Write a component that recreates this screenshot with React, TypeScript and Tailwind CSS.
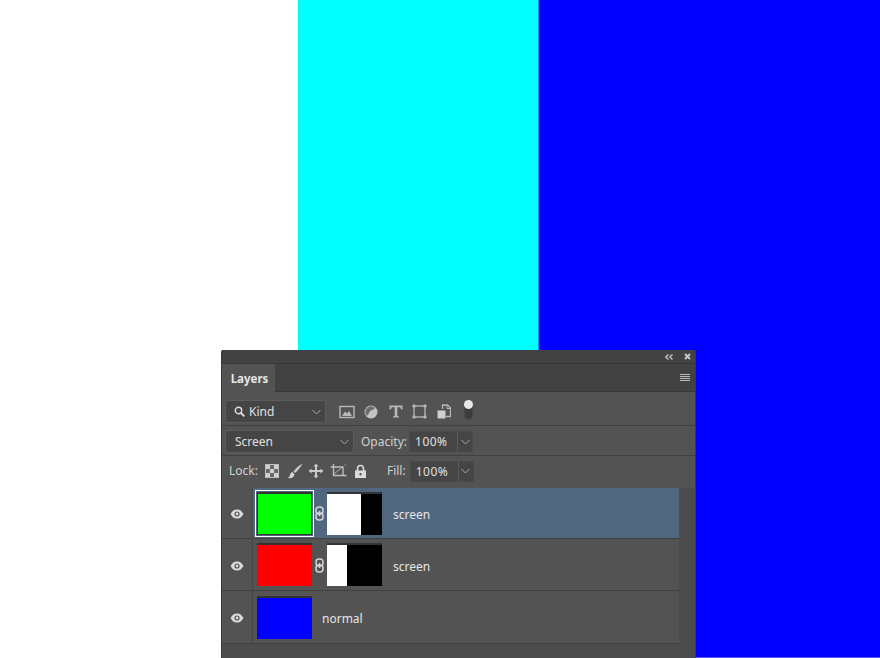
import React from "react";

const font = { fontFamily: '"Noto Sans", "Liberation Sans", sans-serif' };

function Chevron() {
  return (
    <svg width="9" height="6" viewBox="0 0 9 6" className="shrink-0">
      <path d="M0.500 1 L4.500 5 L8.500 1" fill="none" stroke="#aaaaaa" strokeWidth="1" />
    </svg>
  );
}

function Eye() {
  return (
    <svg width="14" height="10" viewBox="0 0 14 10">
      <path d="M0.500 5 C3 1 5 0.500 7 0.500 C9 0.500 11 1 13.500 5 C11 9 9 9.500 7 9.500 C5 9.500 3 9 0.500 5 Z" fill="#dcdcdc" />
      <circle cx="7" cy="5" r="2.600" fill="#535353" />
      <circle cx="7" cy="5" r="1.400" fill="#dcdcdc" />
    </svg>
  );
}

function Link() {
  return (
    <svg width="9" height="15" viewBox="0 0 9 15" className="shrink-0">
      <rect x="1" y="1" width="7" height="7" rx="3" fill="none" stroke="#d4d4d4" strokeWidth="1.500" />
      <rect x="1" y="7" width="7" height="7" rx="3" fill="none" stroke="#d4d4d4" strokeWidth="1.500" />
      <path d="M4.500 5v5" stroke="#d4d4d4" strokeWidth="1.500" />
    </svg>
  );
}

function Thumb({ color, selected }: { color: string; selected?: boolean }) {
  return (
    <div
      className={`w-[55px] h-[43px] border-t-2 border-t-[#333333] ${selected ? "border-x border-b border-x-[#333333] border-b-[#333333]" : ""}`}
      style={{ backgroundColor: color }}
    />
  );
}

function Mask({ white }: { white: number }) {
  return (
    <div className="w-[55px] h-[43px] border-t-2 border-t-[#333333] bg-black">
      <div className="h-full bg-white" style={{ width: white }} />
    </div>
  );
}

function FilterIcons() {
  return (
    <div className="flex items-center ml-[13px]">
      <svg width="16" height="14" viewBox="0 0 16 14">
        <rect x="1" y="1.500" width="14" height="11" fill="none" stroke="#b8b8b8" strokeWidth="1.400" />
        <path d="M3 11 L6 6.500 L8 8.500 L10 6 L13 11 Z" fill="#b8b8b8" />
      </svg>
      <svg width="14" height="14" viewBox="0 0 14 14" className="ml-[9px]">
        <circle cx="7" cy="7" r="6.500" fill="#c4c4c4" />
        <path d="M11 3 A5.600 5.600 0 0 0 3 11 C5 9 5 6.500 7 5.500 C9 4.500 10 4.500 11 3 Z" fill="#6e6e6e" />
      </svg>
      <svg width="14" height="13" viewBox="0 0 14 13" className="ml-[11px]">
        <path d="M0.500 0.500h13v4h-1.300l-1-2.200H8.300v8.500l1.700 0.700v1H4v-1l1.700-0.700V2.300H2.800l-1 2.200H0.500Z" fill="#b8b8b8" />
      </svg>
      <svg width="15" height="15" viewBox="0 0 15 15" className="ml-[9px]">
        <rect x="2" y="2" width="11" height="11" fill="none" stroke="#b8b8b8" strokeWidth="1.300" />
        <rect x="0.500" y="0.500" width="3" height="3" rx="1" fill="#b8b8b8" />
        <rect x="11.500" y="0.500" width="3" height="3" rx="1" fill="#b8b8b8" />
        <rect x="0.500" y="11.500" width="3" height="3" rx="1" fill="#b8b8b8" />
        <rect x="11.500" y="11.500" width="3" height="3" rx="1" fill="#b8b8b8" />
      </svg>
      <svg width="14" height="15" viewBox="0 0 14 15" className="ml-[10px]">
        <path d="M5.500 5V1h5l3 3v8.500H9" fill="none" stroke="#b8b8b8" strokeWidth="1.300" />
        <path d="M10 1v3.500h3.500" fill="none" stroke="#b8b8b8" strokeWidth="1" />
        <rect x="0.500" y="6.500" width="8" height="8" fill="#d0d0d0" />
      </svg>
      <div className="relative w-[9px] h-[15px] rounded-full bg-[#3c3c3c] border border-[#484848] ml-[13px] mt-[1px]">
        <div className="absolute left-[-1px] top-[-6px] w-[9px] h-[9px] rounded-full bg-[#e6e6e6]" />
      </div>
    </div>
  );
}

function LockIcons() {
  return (
    <div className="flex items-center ml-[7px]">
      <svg width="14" height="14" viewBox="0 0 14 14">
        <rect x="0.500" y="0.500" width="13" height="13" fill="#6a6a6a" stroke="#c0c0c0" />
        <path d="M1 1h4v4H1ZM9 1h4v4H9ZM5 5h4v4H5ZM1 9h4v4H1ZM9 9h4v4H9Z" fill="#d0d0d0" />
      </svg>
      <svg width="16" height="16" viewBox="0 0 16 16" className="ml-[8px]">
        <path d="M15.500 0.500 C12 2.500 8 6 6.500 8.500 L8 10 C10.500 8 14 4 15.500 0.500 Z" fill="#c8c8c8" />
        <path d="M5.500 9 C3 9.500 3.500 12 2.500 13.500 C2 14.200 1 14.500 0.500 14.800 C3 15.800 6.500 15.500 7.500 11.500 Z" fill="#d4d4d4" />
      </svg>
      <svg width="16" height="16" viewBox="0 0 16 16" className="ml-[5px]">
        <path d="M8 0.500 L10.500 3.500H9V7H12.500V5.500L15.500 8L12.500 10.500V9H9V12.500H10.500L8 15.500L5.500 12.500H7V9H3.500V10.500L0.500 8L3.500 5.500V7H7V3.500H5.500Z" fill="#c8c8c8" />
      </svg>
      <svg width="17" height="16" viewBox="0 0 17 16" className="ml-[6px]">
        <path d="M0.500 4h12.500v9M3.500 1v11.500h13" fill="none" stroke="#c0c0c0" strokeWidth="1.300" />
        <path d="M4 11 L12.500 4" stroke="#c0c0c0" strokeWidth="0.900" />
        <path d="M14.500 1.500l1 1" stroke="#c0c0c0" />
      </svg>
      <svg width="13" height="15" viewBox="0 0 13 15" className="ml-[7px]">
        <path d="M3.500 7V4.500a3 3 0 0 1 6 0V7" fill="none" stroke="#dcdcdc" strokeWidth="1.600" />
        <path d="M1 6.500h11V14H1Z M6.500 9a1.200 1.200 0 1 0 0.010 0Z" fill="#dcdcdc" fillRule="evenodd" />
      </svg>
    </div>
  );
}

function Percent() {
  return (
    <div className="flex h-[21px] w-[64px] rounded-[2px] bg-[#454545] border border-[#4a4a4a] text-[#e0e0e0]">
      <div className="w-[48px] pl-[5px] leading-[19px] tracking-[0.5px] border-r border-[#5c5c5c]">100%</div>
      <div className="flex-1 flex items-center justify-center"><Chevron /></div>
    </div>
  );
}

function LayerRow({
  selected,
  name,
  color,
  mask,
  h,
}: {
  selected?: boolean;
  name: string;
  color: string;
  mask?: number;
  h: string;
}) {
  return (
    <div className={`flex ${h} border-b border-[#414141] shrink-0`}>
      <div className="w-[31px] flex items-center justify-center border-r border-[#464646] pt-[2px]">
        <Eye />
      </div>
      <div className={`flex-1 flex items-center pl-[4px] ${selected ? "bg-[#51667f]" : ""}`}>
        <div className={selected ? "outline outline-1 outline-white outline-offset-[1px]" : ""}>
          <Thumb color={color} selected={selected} />
        </div>
        {mask !== undefined ? (
          <>
            <div className="w-[15px] flex justify-center pt-[1px]"><Link /></div>
            <Mask white={mask} />
            <span className="ml-[11px] pt-[4px] text-[#e6e6e6]">{name}</span>
          </>
        ) : (
          <span className="ml-[10px] pt-[4px] text-[#e6e6e6]">{name}</span>
        )}
      </div>
    </div>
  );
}

export default function App() {
  return (
    <div className="relative w-[880px] h-[658px] overflow-hidden flex text-[12px]" style={font}>
      <div className="w-[298px] bg-white" />
      <div className="w-[240px] bg-[#00ffff]" />
      <div className="w-[1px] bg-[#0090ff]" />
      <div className="flex-1 flex flex-col">
        <div className="flex-1 bg-[#0000ff]" />
        <div className="h-[1px] bg-[#5c5cff]" />
      </div>

      <div className="absolute left-[221px] top-[350px] w-[475px] h-[308px] flex flex-col bg-[#535353] rounded-t-[2px] border-l border-r border-[#3a3a3a]">
        <div className="h-[14px] bg-[#424242] border-b border-[#383838] flex items-center justify-end pr-[4px] gap-[11px] shrink-0">
          <svg width="8" height="6" viewBox="0 0 8 6">
            <path d="M3.500 0.500 L0.800 3 L3.500 5.500 M7.500 0.500 L4.800 3 L7.500 5.500" fill="none" stroke="#c8c8c8" strokeWidth="1.300" />
          </svg>
          <svg width="7" height="7" viewBox="0 0 7 7">
            <path d="M1 1 L6 6 M6 1 L1 6" stroke="#c8c8c8" strokeWidth="2" />
          </svg>
        </div>
        <div className="h-[28px] bg-[#424242] border-b border-[#383838] flex items-stretch justify-between shrink-0">
          <div className="w-[53px] h-[28px] bg-[#535353] flex items-center justify-center font-bold text-[#e6e6e6] text-[11.500px] pt-[1px] pl-[2px]">Layers</div>
          <div className="flex flex-col justify-center gap-[1px] mr-[5px]">
            <div className="w-[10px] h-[1px] bg-[#bbbbbb]" />
            <div className="w-[10px] h-[1px] bg-[#bbbbbb]" />
            <div className="w-[10px] h-[1px] bg-[#bbbbbb]" />
            <div className="w-[10px] h-[1px] bg-[#bbbbbb]" />
          </div>
        </div>

        <div className="h-[34px] flex items-center pl-[3px] pt-[6px] border-b border-[#414141] shrink-0">
          <div className="w-[101px] h-[23px] rounded-[3px] bg-[#454545] border border-[#5c5c5c] flex items-center pl-[8px] pr-[4px] text-[#e0e0e0]">
            <svg width="11" height="11" viewBox="0 0 11 11" className="mr-[4px]">
              <circle cx="4.500" cy="4.500" r="3.200" fill="none" stroke="#e0e0e0" strokeWidth="1.400" />
              <path d="M7 7l3.300 3.300" stroke="#e0e0e0" strokeWidth="1.800" />
            </svg>
            <span className="flex-1">Kind</span>
            <Chevron />
          </div>
          <FilterIcons />
        </div>

        <div className="h-[30px] flex items-center pl-[3px] pt-[2px] border-b border-[#414141] shrink-0">
          <div className="w-[129px] h-[23px] rounded-[3px] bg-[#454545] border border-[#5c5c5c] flex items-center pl-[9px] pr-[4px] text-[#e0e0e0]">
            <span className="flex-1">Screen</span>
            <Chevron />
          </div>
          <span className="ml-[7px] mr-[2px] text-[#d0d0d0]">Opacity:</span>
          <Percent />
        </div>

        <div className="h-[32px] flex items-center pl-[7px] pb-[2px] shrink-0">
          <span className="text-[#d0d0d0]">Lock:</span>
          <LockIcons />
          <span className="ml-[20px] mr-[4px] text-[#d0d0d0]">Fill:</span>
          <Percent />
        </div>

        <div className="flex-1 flex">
          <div className="flex-1 flex flex-col">
            <LayerRow selected name="screen" color="#00ff00" mask={34} h="h-[51px]" />
            <LayerRow name="screen" color="#ff0000" mask={20} h="h-[52px]" />
            <LayerRow name="normal" color="#0000ff" h="h-[53px]" />
            <div className="flex-1 bg-[#4c4c4c]" />
          </div>
          <div className="w-[16px] bg-[#4b4b4b]" />
        </div>
      </div>
    </div>
  );
}
